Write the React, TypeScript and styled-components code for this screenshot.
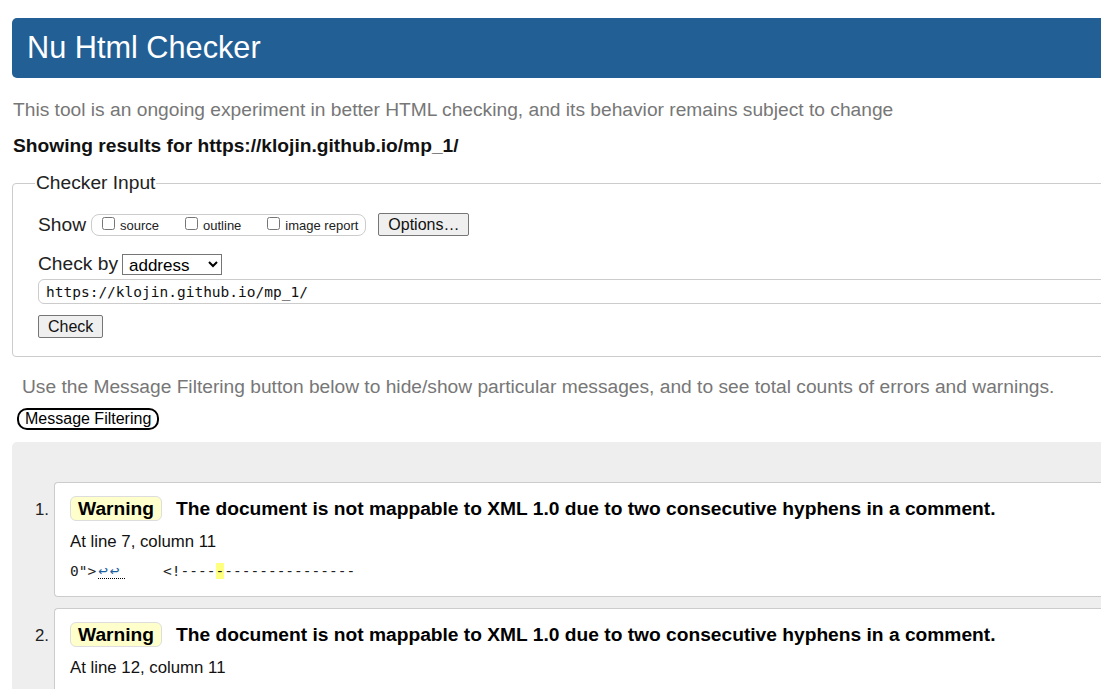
import styled, { createGlobalStyle } from 'styled-components';

const GlobalStyle = createGlobalStyle`
  html, body {
    margin: 0;
    padding: 0;
    background: #fff;
    overflow: hidden;
  }
  body {
    font-family: "Liberation Sans", Arial, sans-serif;
    color: #000;
  }
`

const Page = styled.div`
  width: 1240px;
  padding: 18px 0 0 12px;
  display: flex;
  flex-direction: column;
`

const Header = styled.h1`
  margin: 0;
  height: 60px;
  display: flex;
  align-items: center;
  padding-left: 15px;
  background: #225f95;
  color: #fff;
  font-size: 30.7px;
  font-weight: normal;
  border-radius: 5px 0 0 5px;
`

const Intro = styled.p`
  margin: 21px 0 0 1px;
  font-size: 19.2px;
  line-height: 22px;
  color: #777;
`

const Showing = styled.p`
  margin: 14px 0 0 1px;
  font-size: 19.2px;
  line-height: 22px;
  font-weight: bold;
  color: #111;
`

const Fieldset = styled.fieldset`
  margin: 15px 0 0 0;
  padding: 19px 0 18px 25px;
  border: 1px solid #ccc;
  border-radius: 4px;
  display: flex;
  flex-direction: column;
  align-items: flex-start;
`

const Legend = styled.legend`
  font-size: 19.2px;
  line-height: 22px;
  color: #222;
  padding: 0 1px;
  margin-left: -3px;
`

const Row = styled.div`
  display: flex;
  align-items: center;
  gap: 4px;
  height: ${props => props.h || 23}px;
  margin-top: ${props => props.mt || 0}px;
  font-size: 19.2px;
  color: #222;
`

const CheckGroup = styled.div`
  display: flex;
  align-items: center;
  height: 20px;
  border: 1px solid #ccc;
  border-radius: 8px;
  padding: 0 7px 0 8px;
  gap: 24px;
  margin-left: 1px;
`

const CheckLabel = styled.label`
  display: flex;
  align-items: flex-end;
  font-size: 13px;
  color: #222;
  gap: 3px;

  input {
    margin: 0 2px 3px 2px;
    width: 13px;
    height: 13px;
  }
`

const PlainButton = styled.button`
  font-family: "Liberation Sans", Arial, sans-serif;
  font-size: 16px;
  color: #111;
  background: #efefef;
  border: 1px solid #767676;
  border-radius: 2px;
  padding: 0 9px;
  height: 23px;
  margin-left: ${props => props.ml || 0}px;
  margin-top: ${props => props.mt || 0}px;
`

const Select = styled.select`
  font-family: "Liberation Sans", Arial, sans-serif;
  font-size: 17px;
  width: 100px;
  height: 21px;
  border: 1px solid #767676;
  border-radius: 0;
  background: #fff;
  color: #000;
  padding: 0 2px;
`

const UrlInput = styled.div`
  width: 1180px;
  height: 25px;
  box-sizing: border-box;
  border: 1px solid #ccc;
  border-radius: 6px;
  display: flex;
  align-items: center;
  padding-left: 7px;
  font-family: "DejaVu Sans Mono", "Liberation Mono", monospace;
  font-size: 14.5px;
  color: #111;
  margin-top: 4px;
`

const Hint = styled.p`
  margin: 19px 0 0 10px;
  font-size: 19.2px;
  line-height: 22px;
  color: #777;
`

const FilterButton = styled.button`
  align-self: flex-start;
  margin: 10px 0 0 5px;
  font-family: "Liberation Sans", Arial, sans-serif;
  font-size: 16px;
  height: 22px;
  padding: 0 6px;
  background: #fff;
  color: #000;
  border: 2px solid #000;
  border-radius: 10px;
  line-height: 16px;
`

const Results = styled.ol`
  list-style: none;
  margin: 12px 0 0 0;
  padding: 40px 0 20px 0;
  background: #eee;
  border-radius: 5px 0 0 0;
  display: flex;
  flex-direction: column;
  gap: 11px;
`

const Item = styled.li`
  display: flex;
  align-items: flex-start;
`

const Num = styled.span`
  width: 42px;
  box-sizing: border-box;
  text-align: right;
  padding: 18px 5px 0 0;
  font-size: 16.8px;
  line-height: 20px;
  color: #222;
`

const Card = styled.div`
  flex: 1;
  background: #fff;
  border: 1px solid #ccc;
  border-right: none;
  border-radius: 4px 0 0 4px;
  padding: 13px 0 15px 15px;
`

const Title = styled.div`
  display: flex;
  align-items: center;
  gap: 14px;
  font-size: 19.2px;
  font-weight: bold;
  color: #000;
`

const Badge = styled.span`
  background: #ffffcc;
  border: 1px solid #ddd;
  border-radius: 6px;
  height: 23px;
  display: flex;
  align-items: center;
  padding: 0 7px;
`

const Location = styled.p`
  margin: 11px 0 0 0;
  font-size: 16.8px;
  line-height: 20px;
  color: #111;
`

const Extract = styled.pre`
  margin: 9px 0 0 0;
  font-family: "DejaVu Sans Mono", "Liberation Mono", monospace;
  font-size: 14.5px;
  line-height: 20px;
  color: #222;
  white-space: pre;
`

const Newline = styled.span`
  display: inline-block;
  width: 27px;
  margin: 0 3px 0 2px;
  font-size: 16px;
  line-height: 14px;
  letter-spacing: 2px;
  color: #1e5fa0;
  border-bottom: 1px dotted #000;
`

const Mark = styled.mark`
  background: #ffff80;
  color: inherit;
`

const messages = [
  { line: 7, column: 11 },
  { line: 12, column: 11 },
]

export default function App() {
  return (
    <>
      <GlobalStyle />
      <Page>
        <Header>Nu Html Checker</Header>
        <Intro>This tool is an ongoing experiment in better HTML checking, and its behavior remains subject to change</Intro>
        <Showing>Showing results for https://klojin.github.io/mp_1/</Showing>

        <Fieldset>
          <Legend>Checker Input</Legend>
          <Row>
            <span>Show</span>
            <CheckGroup>
              <CheckLabel><input type="checkbox" />source</CheckLabel>
              <CheckLabel><input type="checkbox" />outline</CheckLabel>
              <CheckLabel><input type="checkbox" />image report</CheckLabel>
            </CheckGroup>
            <PlainButton ml={8}>Options…</PlainButton>
          </Row>
          <Row h={22} mt={17}>
            <span>Check by</span>
            <Select defaultValue="address">
              <option value="address">address</option>
              <option value="file">file upload</option>
              <option value="text">text input</option>
            </Select>
          </Row>
          <UrlInput>https://klojin.github.io/mp_1/</UrlInput>
          <PlainButton mt={11}>Check</PlainButton>
        </Fieldset>

        <Hint>Use the Message Filtering button below to hide/show particular messages, and to see total counts of errors and warnings.</Hint>
        <FilterButton>Message Filtering</FilterButton>

        <Results>
          {messages.map((m, i) => (
            <Item key={i}>
              <Num>{i + 1}.</Num>
              <Card>
                <Title>
                  <Badge>Warning</Badge>
                  <span>The document is not mappable to XML 1.0 due to two consecutive hyphens in a comment.</span>
                </Title>
                <Location>At line {m.line}, column {m.column}</Location>
                <Extract>0"&gt;<Newline>↩↩</Newline>    &lt;!----<Mark>-</Mark>---------------</Extract>
              </Card>
            </Item>
          ))}
        </Results>
      </Page>
    </>
  );
}
